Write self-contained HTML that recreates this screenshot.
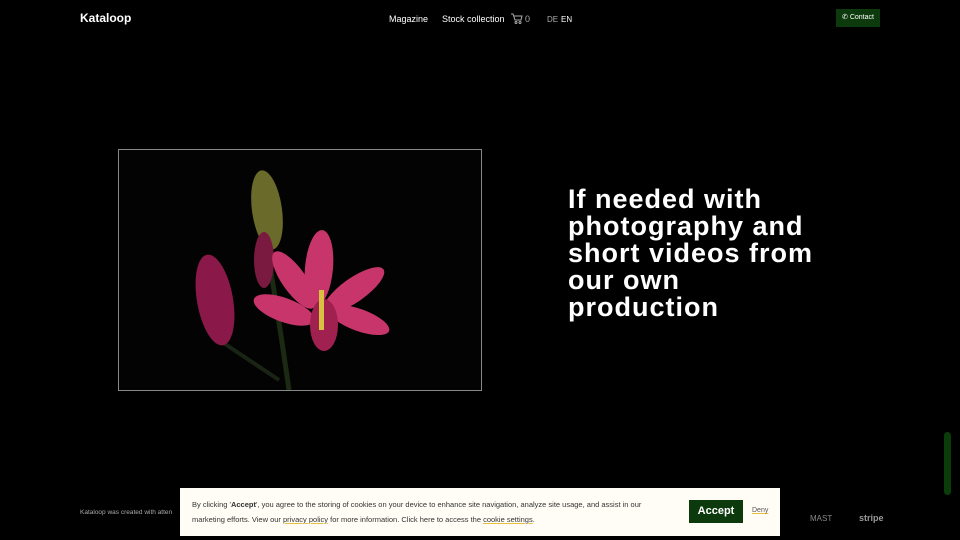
<!DOCTYPE html>
<html><head><meta charset="utf-8"><style>
*{margin:0;padding:0;box-sizing:border-box}
body{width:960px;height:540px;background:#000;color:#fff;font-family:"Liberation Sans",sans-serif;position:relative;overflow:hidden}
.abs{position:absolute}
.nav{font-size:9px;top:14px}
h1{position:absolute;left:568px;top:186px;font-size:27px;line-height:27px;font-weight:bold;letter-spacing:1px;width:262px}
.cookie{left:180px;top:488px;width:600px;height:48px;background:#fffdf5;color:#333;font-size:7.5px;line-height:15px;padding:9px 12px}
.cookie u{text-decoration:underline;text-decoration-color:#e8c040}
</style></head><body>
<div class="abs" style="left:80px;top:11px;font-size:12px;font-weight:bold">Kataloop</div>
<div class="abs nav" style="left:389px">Magazine</div>
<div class="abs nav" style="left:442px">Stock collection</div>
<svg class="abs" style="left:511px;top:12px" width="12" height="12" viewBox="0 0 12 12" fill="none" stroke="#aaa" stroke-width="1"><path d="M0 2h2l2 6h6l1-4H3"/><circle cx="5" cy="10.5" r="1"/><circle cx="9" cy="10.5" r="1"/></svg>
<div class="abs nav" style="left:525px;color:#aaa">0</div>
<div class="abs nav" style="left:547px;color:#aaa;font-size:8px;top:15px">DE</div>
<div class="abs nav" style="left:561px;font-size:8px;top:15px">EN</div>
<div class="abs" style="left:836px;top:9px;width:44px;height:18px;background:#0c3a0c;font-size:7px;line-height:18px;text-align:center">✆ Contact</div>
<div class="abs" style="left:118px;top:149px;width:364px;height:242px;border:1px solid #888;background:#030303;overflow:hidden">
<svg width="364" height="242" viewBox="0 0 364 242">
<path d="M150 110 Q160 170 170 240" stroke="#1c2a14" stroke-width="5" fill="none"/>
<path d="M100 190 Q130 210 160 230" stroke="#1a2414" stroke-width="4" fill="none"/>
<ellipse cx="148" cy="60" rx="15" ry="40" fill="#6a6a2a" transform="rotate(-8 148 60)"/>
<ellipse cx="96" cy="150" rx="18" ry="46" fill="#8a1848" transform="rotate(-10 96 150)"/>
<ellipse cx="145" cy="110" rx="10" ry="28" fill="#7a1a40"/>
<g fill="#c8356a">
<ellipse cx="200" cy="118" rx="14" ry="38" transform="rotate(5 200 118)"/>
<ellipse cx="175" cy="130" rx="12" ry="34" transform="rotate(-35 175 130)"/>
<ellipse cx="235" cy="140" rx="12" ry="36" transform="rotate(55 235 140)"/>
<ellipse cx="165" cy="160" rx="12" ry="32" transform="rotate(-70 165 160)"/>
<ellipse cx="240" cy="170" rx="11" ry="32" transform="rotate(110 240 170)"/>
<ellipse cx="205" cy="175" rx="14" ry="26" fill="#a02050"/>
</g>
<rect x="200" y="140" width="5" height="40" fill="#d8c040"/>
</svg></div>
<h1>If needed with photography and short videos from our own production</h1>
<div class="abs" style="left:80px;top:509px;font-size:6.5px;color:#aaa">Kataloop was created with atten</div>
<div class="abs" style="left:810px;top:514px;font-size:8px;color:#888">MAST</div>
<div class="abs" style="left:859px;top:513px;font-size:9px;color:#999;font-weight:bold">stripe</div>
<div class="abs" style="left:944px;top:432px;width:7px;height:63px;border-radius:4px;background:#0b3d0b"></div>
<div class="abs cookie">By clicking '<b>Accept</b>', you agree to the storing of cookies on your device to enhance site navigation, analyze site usage, and assist in our<br>marketing efforts. View our <u>privacy policy</u> for more information. Click here to access the <u>cookie settings</u>.</div>
<div class="abs" style="left:689px;top:500px;width:54px;height:23px;background:#0c3a0c;color:#fff;font-size:11px;font-weight:bold;line-height:23px;text-align:center">Accept</div>
<div class="abs" style="left:752px;top:507px;font-size:7px;color:#555;text-decoration:underline;text-decoration-color:#e8c040">Deny</div>
</body></html>
